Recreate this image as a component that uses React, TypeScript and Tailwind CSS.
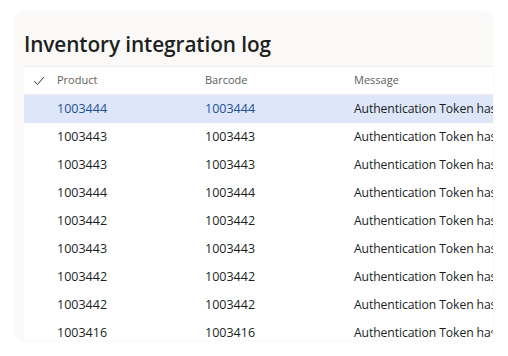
import React from "react";

const rows = [
  ["1003444", "1003444"],
  ["1003443", "1003443"],
  ["1003443", "1003443"],
  ["1003444", "1003444"],
  ["1003442", "1003442"],
  ["1003443", "1003443"],
  ["1003442", "1003442"],
  ["1003442", "1003442"],
  ["1003416", "1003416"],
];

export default function App() {
  return (
    <div
      className="w-[508px] h-[356px] bg-white overflow-hidden"
      style={{ fontFamily: '"Open Sans", "Noto Sans", sans-serif' }}
    >
      <div className="ml-[15px] mt-[12px] w-[478px] h-[328px] rounded-[10px] bg-[#faf9f8] overflow-hidden shadow-[0_0_3px_rgba(0,0,0,0.06)] flex flex-col">
        <div className="pl-[9px] pt-[19px] h-[54px] shrink-0 text-[20.8px] font-semibold text-[#201f1e] leading-[26px] tracking-[-0.1px]">
          Inventory integration log
        </div>
        <div className="ml-[9px] flex-1 bg-white border-t border-[#f0efee] overflow-hidden">
          <div className="flex h-[28px] items-center border-b border-[#edebe9] text-[11px] text-[#605e5c] whitespace-nowrap">
            <div className="w-[28px] shrink-0 flex justify-center pl-[2px]">
              <svg width="12" height="12" viewBox="0 0 12 12" fill="none">
                <path d="M1.5 6.5 L4.5 9.5 L10.5 2.5" stroke="#323130" strokeWidth="1" strokeLinecap="round" strokeLinejoin="round" />
              </svg>
            </div>
            <div className="w-[148px] shrink-0 pl-[5px]">Product</div>
            <div className="w-[149px] shrink-0 pl-[5px]">Barcode</div>
            <div className="shrink-0 pl-[5px]">Message</div>
          </div>
          {rows.map((r, i) => (
            <div
              key={i}
              className={
                i === 0
                  ? "flex h-[28px] items-center text-[12.5px] bg-[#dde7f9] text-[#1f4f97] whitespace-nowrap"
                  : "flex h-[28px] items-center text-[12.5px] text-[#201f1e] whitespace-nowrap"
              }
            >
              <div className="w-[28px] shrink-0" />
              <div className="w-[148px] shrink-0 pl-[5px]">{r[0]}</div>
              <div className="w-[149px] shrink-0 pl-[5px]">{r[1]}</div>
              <div className="shrink-0 pl-[5px] text-[12.2px] tracking-[-0.1px] text-[#201f1e]">Authentication Token has expired</div>
            </div>
          ))}
        </div>
      </div>
    </div>
  );
}
